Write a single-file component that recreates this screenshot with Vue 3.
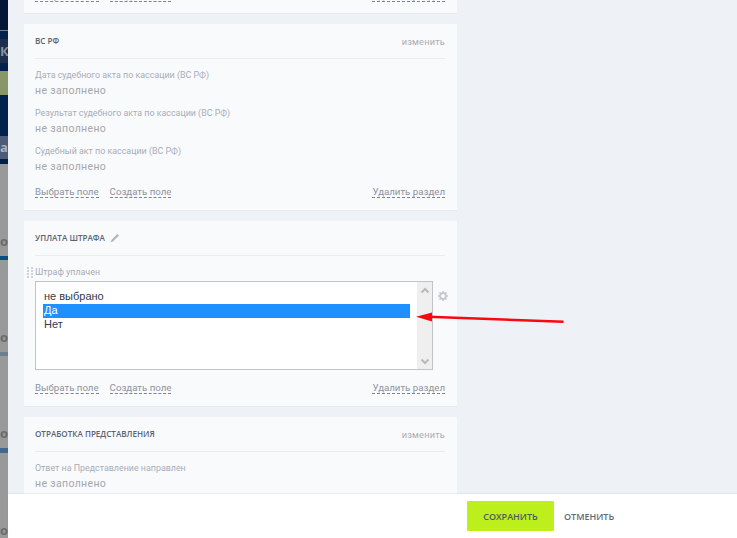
<script setup>
const strip = [
  { h: 30, c: '#041538' }, { h: 1, c: '#7c7f87' }, { h: 8, c: '#02214d' },
  { h: 24, c: '#1e2f4e', t: 'К', tc: '#8b909b' }, { h: 8, c: '#02214d' }, { h: 24, c: '#8a9568' },
  { h: 41, c: '#02214d' }, { h: 23, c: '#4c5b78', t: 'а', tc: '#a9afbb' }, { h: 5, c: '#021f4a' },
  { h: 65, c: '#999999' }, { h: 24, c: '#999999', t: 'ов', tc: '#6a6a6a' },
  { h: 3, c: '#999999' }, { h: 4, c: '#0f4d80' }, { h: 65, c: '#999999' },
  { h: 24, c: '#999999', t: 'ов', tc: '#6a6a6a' }, { h: 3, c: '#999999' }, { h: 4, c: '#6c7f91' },
  { h: 65, c: '#999999' }, { h: 24, c: '#999999', t: 'ов', tc: '#6a6a6a' },
  { h: 3, c: '#999999' }, { h: 5, c: '#41688f' }, { h: 65, c: '#999999' },
  { h: 24, c: '#999999', t: 'ов', tc: '#6a6a6a' }
]
const vsFields = [
  'Дата судебного акта по кассации (ВС РФ)',
  'Результат судебного акта по кассации (ВС РФ)',
  'Судебный акт по кассации (ВС РФ)'
]
</script>

<template>
  <div class="page">
    <div class="strip">
      <div
        v-for="(s, i) in strip"
        :key="i"
        class="seg"
        :style="{ height: s.h + 'px', background: s.c, color: s.tc }"
      >{{ s.t }}</div>
    </div>
    <div class="drawer">
      <div class="scroll">
        <section class="card card-top">
          <div class="links">
            <span class="dash">Выбрать поле</span>
            <span class="dash">Создать поле</span>
            <span class="dash right">Удалить раздел</span>
          </div>
        </section>

        <section class="card card-vs">
          <header class="head">
            <h3>ВС РФ</h3>
            <span class="edit">изменить</span>
          </header>
          <div v-for="f in vsFields" :key="f" class="field">
            <div class="label">{{ f }}</div>
            <div class="value">не заполнено</div>
          </div>
          <div class="links">
            <span class="dash">Выбрать поле</span>
            <span class="dash">Создать поле</span>
            <span class="dash right">Удалить раздел</span>
          </div>
        </section>

        <section class="card card-pay">
          <header class="head">
            <h3>УПЛАТА ШТРАФА</h3>
            <svg class="pencil" width="10" height="10" viewBox="0 0 10 10">
              <path d="M0.8 9.2 L1.4 7 L7.4 1 L9 2.6 L3 8.6 Z" fill="#b3b5b9" />
            </svg>
          </header>
          <div class="label-row">
            <svg class="grip" width="6" height="11" viewBox="0 0 6 11">
              <g fill="#d0d2d6">
                <rect x="0" y="0" width="2" height="2" /><rect x="4" y="0" width="2" height="2" />
                <rect x="0" y="3" width="2" height="2" /><rect x="4" y="3" width="2" height="2" />
                <rect x="0" y="6" width="2" height="2" /><rect x="4" y="6" width="2" height="2" />
                <rect x="0" y="9" width="2" height="2" /><rect x="4" y="9" width="2" height="2" />
              </g>
            </svg>
            <div class="label">Штраф уплачен</div>
          </div>
          <div class="select-row">
            <div class="listbox">
              <div class="options">
                <div class="opt">не выбрано</div>
                <div class="opt sel">Да</div>
                <div class="opt">Нет</div>
              </div>
              <div class="sb">
                <svg width="10" height="7" viewBox="0 0 10 7"><path d="M1.5 5.5 L5 2 L8.5 5.5" fill="none" stroke="#b9b9b9" stroke-width="2" /></svg>
                <svg width="10" height="7" viewBox="0 0 10 7"><path d="M1.5 1.5 L5 5 L8.5 1.5" fill="none" stroke="#b9b9b9" stroke-width="2" /></svg>
              </div>
            </div>
            <svg class="gear" width="10" height="10" viewBox="0 0 10 10">
              <circle cx="5" cy="5" r="2.9" fill="none" stroke="#c4c6c9" stroke-width="1.7" />
              <path d="M5 0V2M5 8V10M0 5H2M8 5H10M1.5 1.5L2.8 2.8M7.2 7.2L8.5 8.5M8.5 1.5L7.2 2.8M2.8 7.2L1.5 8.5" stroke="#c4c6c9" stroke-width="1.5" />
            </svg>
          </div>
          <div class="links">
            <span class="dash">Выбрать поле</span>
            <span class="dash">Создать поле</span>
            <span class="dash right">Удалить раздел</span>
          </div>
        </section>

        <section class="card card-last">
          <header class="head">
            <h3>ОТРАБОТКА ПРЕДСТАВЛЕНИЯ</h3>
            <span class="edit">изменить</span>
          </header>
          <div class="field">
            <div class="label">Ответ на Представление направлен</div>
            <div class="value">не заполнено</div>
          </div>
        </section>
      </div>
      <footer class="footer">
        <button class="save">СОХРАНИТЬ</button>
        <button class="cancel">ОТМЕНИТЬ</button>
      </footer>
    </div>
    <svg class="arrow" width="737" height="538" viewBox="0 0 737 538">
      <path d="M428 316.7 L563.5 321.8" fill="none" stroke="#f60a0f" stroke-width="2.4" />
      <path d="M416 316.8 L432 312.6 L432 321.6 Z" fill="#f60a0f" />
    </svg>
  </div>
</template>

<style>
html, body { margin: 0; padding: 0; }
</style>

<style scoped>
.page {
  position: relative;
  display: flex;
  width: 737px;
  height: 538px;
  overflow: hidden;
  font-family: Roboto, "Liberation Sans", sans-serif;
  background: #eef1f5;
}
.strip { width: 8px; flex: none; overflow: hidden; }
.seg {
  display: flex;
  align-items: center;
  width: 8px;
  overflow: hidden;
  font: 700 13px/1 "Open Sans", sans-serif;
  white-space: nowrap;
}
.drawer { flex: 1; display: flex; flex-direction: column; min-width: 0; }
.scroll {
  flex: 1;
  height: 494px;
  overflow: hidden;
  padding-left: 16px;
  background: #eef1f5;
}
.card {
  width: 433px;
  box-sizing: border-box;
  padding: 0 12px 0 11px;
  margin-bottom: 10px;
  background: #f9fafc;
  border-bottom: 1px solid #e6e9ed;
}
.card-top { display: flex; height: 14px; }
.card-top .links { flex: 1; margin-top: -10px; padding-top: 0; height: 12px; }
.card-vs { height: 187px; }
.card-pay { height: 186px; }
.card-last { height: 120px; }
.head {
  display: flex;
  align-items: center;
  height: 34px;
  border-bottom: 1px solid #e9ebef;
}
.head h3 {
  margin: 0;
  font: 600 8.1px/1 "Open Sans", sans-serif;
  color: #5a6472;
}
.edit { margin-left: auto; font-size: 9.2px; color: #a9abb0; letter-spacing: 0.2px; }
.pencil { margin-left: 5px; }
.field { padding-top: 9px; height: 29px; }
.label { font-size: 8.9px; line-height: 14px; color: #a7adb8; }
.value { font-size: 10.5px; line-height: 18px; color: #a5a7ab; letter-spacing: 0.35px; }
.label-row { position: relative; padding-top: 9px; height: 16px; }
.grip { position: absolute; left: -8px; top: 11px; }
.select-row { display: flex; align-items: flex-start; }
.listbox {
  display: flex;
  flex: none;
  width: 398px;
  height: 89px;
  box-sizing: border-box;
  background: #fff;
  border: 1px solid #c1c3c6;
}
.options { flex: 1; padding: 8px 7px 0; font: 11px/12px "Liberation Sans", sans-serif; color: #333a46; }
.opt { padding-left: 1px; height: 14px; }
.sel { background: #1e90ff; color: #fff; }
.sb {
  width: 15px;
  background: #efefef;
  display: flex;
  flex-direction: column;
  justify-content: space-between;
  align-items: center;
  padding: 5px 0 4px;
}
.gear { flex: none; margin: 10px 0 0 5px; }
.links {
  display: flex;
  gap: 11px;
  font-size: 9.7px;
  line-height: 11px;
  color: #8d939e;
  padding-top: 12px;
}
.dash { border-bottom: 1px dashed #7e838c; }
.right { margin-left: auto; }
.card-vs .links { padding-top: 13px; }
.footer {
  display: flex;
  align-items: center;
  height: 44px;
  flex: none;
  padding-left: 459px;
  background: #fff;
  box-shadow: 0 -1px 1px rgba(0, 0, 0, 0.05);
  position: relative;
}
.save {
  width: 87px;
  height: 30px;
  border: 0;
  border-radius: 1px;
  background: #bcef1c;
  color: #4f5863;
  font: 600 9px/1 "Open Sans", sans-serif;
}
.cancel {
  margin-left: 10px;
  padding: 0;
  border: 0;
  background: none;
  color: #5f6875;
  font: 600 9px/1 "Open Sans", sans-serif;
}
.arrow { position: absolute; left: 0; top: 0; pointer-events: none; }
</style>
